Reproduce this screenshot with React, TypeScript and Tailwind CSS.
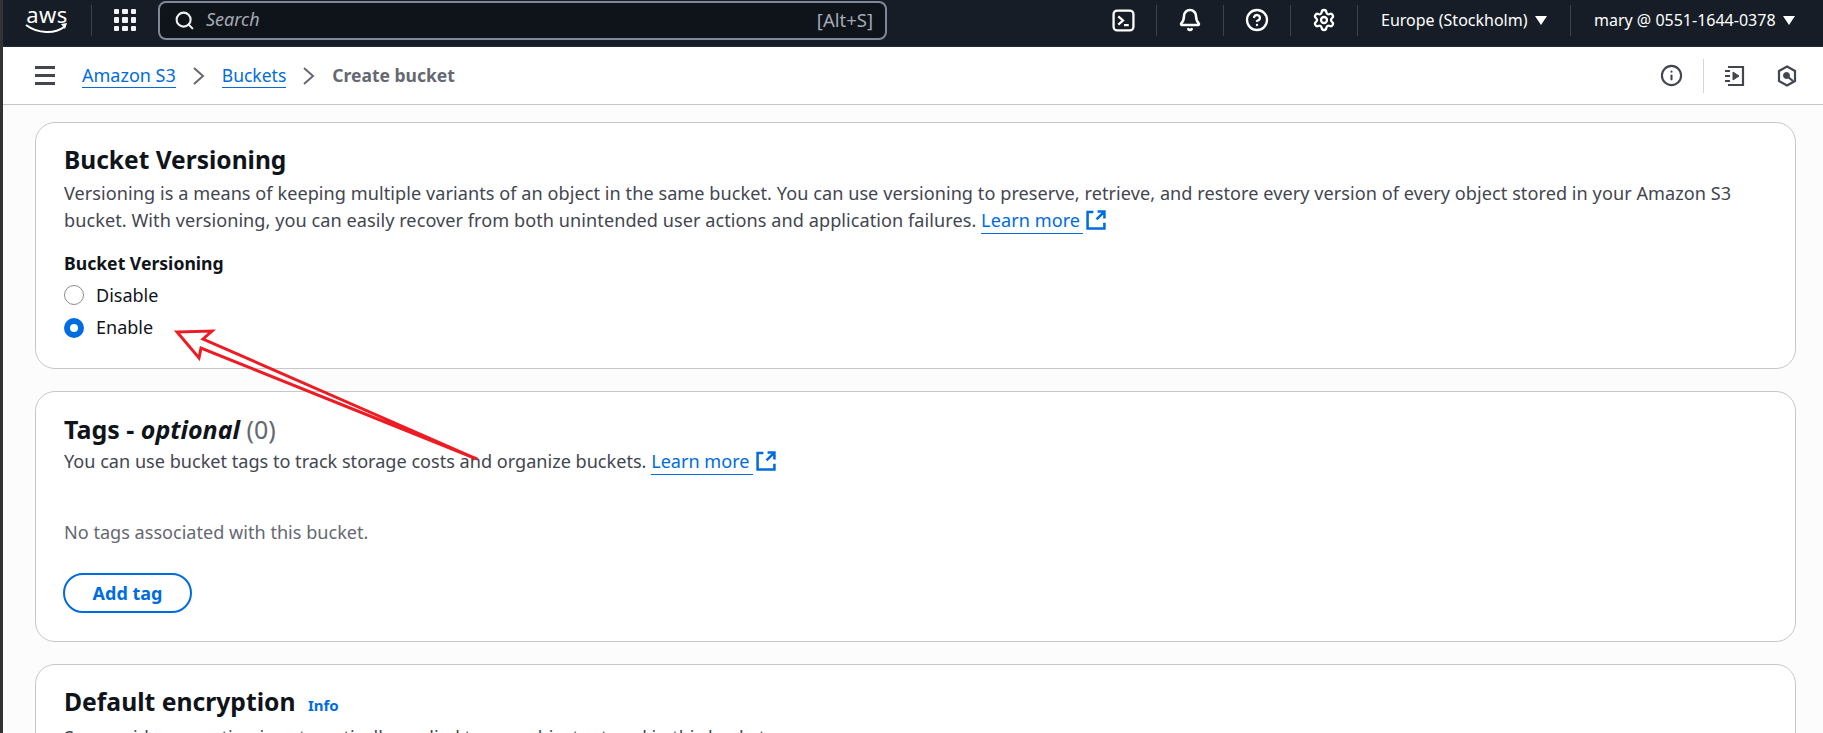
import React from "react";
import { Bell, CircleHelp, Info, Search, Settings } from "lucide-react";

const ink = "text-[#0f141a]";
const sub = "text-[#424650]";
const blue = "text-[#006ce0]";

function ExternalIcon() {
  return (
    <svg width="20" height="20" viewBox="0 0 19 19" fill="none" stroke="#006ce0" strokeWidth="2.4" className="inline ml-[3px] align-[-3px]">
      <path d="M7 2H1.5v15.5H17.5V12" />
      <path d="M11 1.5h6.5V8M17 2l-7 7" />
    </svg>
  );
}

function LearnMore() {
  return (
    <>
      <a className={`${blue} border-b-[1.5px] border-[#006ce0] pr-[3px] pb-[1px]`}>Learn more</a>
      <ExternalIcon />
    </>
  );
}

function Divider() {
  return <div className="w-px h-[31px] bg-[#3b4250]" />;
}

function Caret() {
  return (
    <svg width="12" height="9" viewBox="0 0 12 9" className="ml-[7px]">
      <path d="M0 0h12L6 9z" fill="white" />
    </svg>
  );
}

function TopBar() {
  return (
    <header className="h-[47px] pb-[6px] shrink-0 bg-[#161d26] flex items-center text-white border-b border-[#232b37]">
      <div className="w-[88px] flex flex-col items-center">
        <span className="text-[22px] leading-[24px] -mt-[4px] font-normal tracking-[0.5px]">aws</span>
        <svg width="44" height="12" viewBox="0 0 44 12" className="-mt-[3px]" fill="none">
          <path d="M1 2c12 9 29 9 38 2" stroke="white" strokeWidth="2" />
          <path d="M36 1l6-1-2 6z" fill="white" />
        </svg>
      </div>
      <Divider />
      <div className="w-[66px] flex justify-center">
        <div className="grid grid-cols-3 gap-[3px]">
          {Array.from({ length: 9 }).map((_, i) => (
            <span key={i} className="w-[5.5px] h-[5.5px] rounded-[1px] bg-[#f3f3f7]" />
          ))}
        </div>
      </div>
      <div className="w-[729px] h-[39px] shrink-0 rounded-[8px] border-2 border-[#7d8998] bg-[#0f141a] flex items-center pl-[14px] pr-[12px]">
        <Search size={21} strokeWidth={2.4} className="text-[#eef0f3]" />
        <span className="ml-[11px] -mt-[1px] italic text-[18px] text-[#a4a9b3]">Search</span>
        <span className="ml-auto -mt-[1px] text-[18.5px] text-[#a4a9b3]">[Alt+S]</span>
      </div>
      <div className="ml-auto flex items-center h-full">
        <div className="w-[66px] flex justify-center">
          <svg width="23" height="23" viewBox="0 0 22 22" fill="none" stroke="white" strokeWidth="2.2">
            <rect x="1.5" y="1.5" width="19" height="19" rx="3.5" />
            <path d="M6 7l4.5 4L6 15M11.5 15.5H16" />
          </svg>
        </div>
        <Divider />
        <div className="w-[66px] flex justify-center">
          <Bell size={24} strokeWidth={2.5} />
        </div>
        <Divider />
        <div className="w-[66px] flex justify-center">
          <CircleHelp size={24} strokeWidth={2.3} />
        </div>
        <Divider />
        <div className="w-[66px] flex justify-center">
          <Settings size={24} strokeWidth={2.3} />
        </div>
        <Divider />
        <div className="w-[212px] pl-[23px] flex items-center text-[16px]">
          Europe (Stockholm)
          <Caret />
        </div>
        <Divider />
        <div className="w-[252px] pl-[23px] flex items-center text-[16px]">
          mary @ 0551-1644-0378
          <Caret />
        </div>
      </div>
    </header>
  );
}

function Breadcrumbs() {
  const chevron = (
    <svg width="14" height="18" viewBox="0 0 14 18" fill="none" stroke="#656871" strokeWidth="2" className="mx-[16px]">
      <path d="M2 1l9 8-9 8" />
    </svg>
  );
  return (
    <div className="h-[58px] shrink-0 bg-white border-b border-[#c6c6cd] flex items-center pl-[32px] pr-[26px]">
      <div className="flex flex-col gap-[5px] w-[20px]">
        <span className="h-[3px] bg-[#424650]" />
        <span className="h-[3px] bg-[#424650]" />
        <span className="h-[3px] bg-[#424650]" />
      </div>
      <a className={`${blue} ml-[27px] text-[18px] leading-[24px] border-b-[1.5px] border-[#006ce0]`}>Amazon S3</a>
      {chevron}
      <a className={`${blue} text-[17.5px] leading-[24px] border-b-[1.5px] border-[#006ce0]`}>Buckets</a>
      {chevron}
      <span className="text-[17.5px] font-bold text-[#656871]">Create bucket</span>
      <div className="ml-auto flex items-center text-[#424650]">
        <Info size={23} strokeWidth={2.2} />
        <span className="w-px h-[34px] bg-[#d5d5da] mx-[20px]" />
        <svg width="22" height="22" viewBox="0 0 22 22" fill="none" stroke="currentColor" strokeWidth="2.2">
          <path d="M4 2h15v18H4M1 6h5M1 11h5M1 16h5" />
          <path d="M9 7l6 4-6 4z" fill="currentColor" strokeWidth="1" />
        </svg>
        <svg width="20" height="22" viewBox="0 0 20 22" fill="none" stroke="currentColor" strokeWidth="2.2" className="ml-[31px]">
          <path d="M10 1.5l8 4.5v10l-8 4.5L2 16V6z" />
          <circle cx="9.5" cy="10.5" r="3" fill="currentColor" strokeWidth="1" />
          <path d="M11 12l5 4" />
        </svg>
      </div>
    </div>
  );
}

function Radio({ label, checked }: { label: string; checked?: boolean }) {
  return (
    <div className="flex items-center h-[32.5px]">
      {checked ? (
        <span className="w-[20px] h-[20px] rounded-full border-[6px] border-[#006ce0] bg-white" />
      ) : (
        <span className="w-[20px] h-[20px] rounded-full border-[1.5px] border-[#8c8c94] bg-white" />
      )}
      <span className={`ml-[12px] text-[18px] ${ink}`}>{label}</span>
    </div>
  );
}

function Card({ className, children }: { className: string; children: React.ReactNode }) {
  return <section className={`bg-white border border-[#c6c6cd] rounded-[20px] pl-[28px] pr-[27px] ${className}`}>{children}</section>;
}

function Arrow() {
  return (
    <svg className="absolute left-0 top-0 pointer-events-none" width="500" height="480" fill="none">
      <path
        d="M177 332L212 331L203 339L477 459L201 348L199 358Z"
        stroke="#ed1c24"
        strokeWidth="3"
        strokeLinejoin="miter"
      />
    </svg>
  );
}

export default function App() {
  return (
    <div className="relative h-[733px] w-full overflow-hidden flex bg-[#fcfcfc] font-['Noto_Sans',sans-serif]">
      <div className="w-[3px] shrink-0 bg-[#333333]" />
      <div className="flex-1 min-w-0 flex flex-col">
        <TopBar />
        <Breadcrumbs />
        <main className="flex-1 pl-[32px] pr-[27px] pt-[17px] flex flex-col gap-[22px]">
          <Card className="h-[247px] pt-[21px] shrink-0">
            <h2 className={`text-[24.5px] leading-[32px] font-bold ${ink}`}>Bucket Versioning</h2>
            <p className={`mt-[4px] text-[18.1px] leading-[27px] tracking-[0.06px] ${sub}`}>
              Versioning is a means of keeping multiple variants of an object in the same bucket. You can use versioning to preserve, retrieve, and restore every version of every object stored in your Amazon S3 bucket. With versioning, you can easily recover from both unintended user actions and application failures. <LearnMore />
            </p>
            <div className={`mt-[17px] text-[17.6px] leading-[24px] font-bold ${ink}`}>Bucket Versioning</div>
            <div className="mt-[4px]">
              <Radio label="Disable" />
              <Radio label="Enable" checked />
            </div>
          </Card>
          <Card className="h-[251px] pt-[21px] shrink-0">
            <h2 className={`text-[25px] leading-[32px] font-bold ${ink}`}>
              Tags - <i>optional</i> <span className="font-normal text-[#656871]">(0)</span>
            </h2>
            <p className={`mt-[3px] text-[18.1px] leading-[27px] ${sub}`}>
              You can use bucket tags to track storage costs and organize buckets. <LearnMore />
            </p>
            <p className="mt-[45px] text-[18.1px] leading-[24px] text-[#656871]">No tags associated with this bucket.</p>
            <button className={`mt-[29px] -ml-[1px] h-[40px] w-[129px] rounded-[20px] border-2 border-[#006ce0] bg-white text-[18px] font-bold ${blue}`}>
              Add tag
            </button>
          </Card>
          <Card className="h-[200px] pt-[21px] shrink-0">
            <h2 className={`text-[24.7px] leading-[32px] font-bold ${ink}`}>
              Default encryption <a className={`${blue} ml-[6px] text-[15px] font-bold`}>Info</a>
            </h2>
            <p className={`mt-[3px] text-[18.1px] leading-[27px] ${sub}`}>
              Server-side encryption is automatically applied to new objects stored in this bucket.
            </p>
          </Card>
        </main>
      </div>
      <Arrow />
    </div>
  );
}
